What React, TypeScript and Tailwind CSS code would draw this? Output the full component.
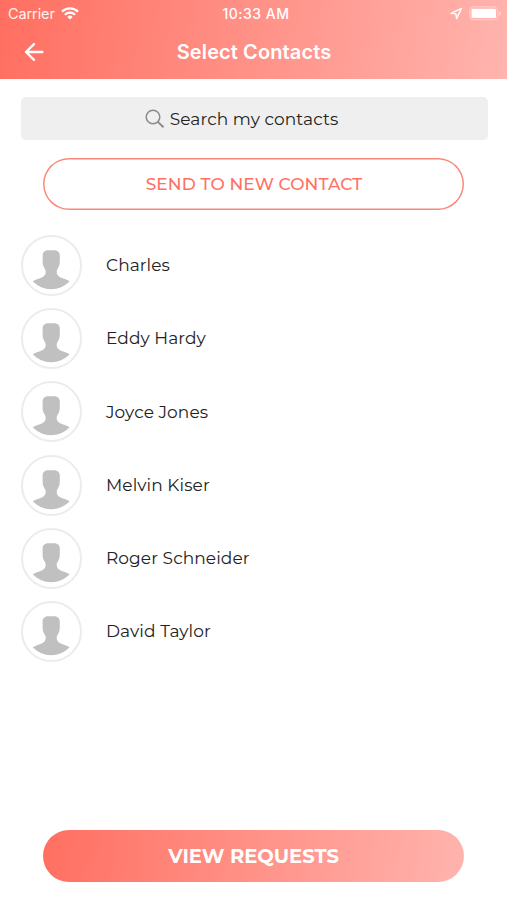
const contacts = ['Charles', 'Eddy Hardy', 'Joyce Jones', 'Melvin Kiser', 'Roger Schneider', 'David Taylor'];

const WifiIcon = () => (
  <svg width="18" height="13" viewBox="0 0 18 13" fill="none" stroke="#fff" strokeWidth="2.3">
    <path d="M1 4.6a11.4 11.4 0 0 1 16 0" />
    <path d="M3.9 7.7a7.2 7.2 0 0 1 10.2 0" />
    <path d="M9 12.6 6.3 9.9a3.8 3.8 0 0 1 5.4 0z" fill="#fff" stroke="none" />
  </svg>
);

const LocationIcon = () => (
  <svg width="13" height="13" viewBox="0 0 13 13" fill="none" stroke="#fff" strokeWidth="1.4" strokeLinejoin="round">
    <path d="M11.4 1.4 1 6.4 5.9 6.9 6.6 11.6z" />
  </svg>
);

const BatteryIcon = () => (
  <svg width="33" height="15" viewBox="0 0 33 15">
    <rect x="0.8" y="0.9" width="27.9" height="12.8" rx="4" fill="none" stroke="#fff" strokeWidth="1.3" strokeOpacity="0.35" />
    <rect x="2.5" y="2.8" width="24.5" height="9.2" rx="1.2" fill="#fff" />
    <path d="M30.3 5.2c2 .8 2 3.600 0 4.400z" fill="#fff" fillOpacity="0.5" />
  </svg>
);

const BackIcon = () => (
  <svg width="20" height="20" viewBox="0 0 20 20" fill="none" stroke="#fff" strokeWidth="2.4" strokeLinecap="round" strokeLinejoin="round">
    <path d="M18.3 10H2.600M10 2.200 2 10l8 7.800" />
  </svg>
);

const SearchIcon = () => (
  <svg width="20" height="20" viewBox="0 0 20 20" fill="none" stroke="#8a8a8a">
    <circle cx="8" cy="8" r="6.8" strokeWidth="1.5" />
    <path d="m12.9 12.9 5.6 5.4" strokeWidth="2" />
  </svg>
);

const Avatar = () => (
  <div className="size-[61px] shrink-0 rounded-full border-2 border-[#ececec] bg-white">
    <svg width="57" height="57" viewBox="0 0 57 57" fill="#c1c0c1">
      <path d="M25 13.300h6.400c3.400 0 5.400 2.300 5.400 5.500v5c0 3.200-.5 5.500-1.700 7.200-.8 1.200-1.400 2.200-1.400 4 0 2.600 1.400 4.300 4 5.500 3.300 1.500 6.500 2 9 3.800-5.300 5.300-11.500 8-18.500 8s-13.200-2.700-18.500-8c2.500-1.800 5.700-2.300 9-3.800 2.600-1.200 4-2.900 4-5.500 0-1.800-.6-2.800-1.400-4-1.200-1.700-1.700-4-1.700-7.200v-5c0-3.200 2-5.500 5.400-5.500z" />
    </svg>
  </div>
);

export default function App() {
  return (
    <div className="flex h-[900px] w-[507px] flex-col overflow-hidden bg-white font-['Montserrat','Inter',sans-serif] text-[#222]">
      <header className="h-[79px] shrink-0 bg-[linear-gradient(97deg,#ff6f61,#ffb4ae)] font-['Inter',sans-serif] text-white">
        <div className="grid h-[27px] grid-cols-3 items-center pr-[5px] pl-2">
          <div className="flex items-center gap-1.5">
            <span className="text-[14.5px] tracking-[-0.1px] opacity-90">Carrier</span>
            <WifiIcon />
          </div>
          <span className="pl-0.5 text-center text-[14px] font-medium tracking-[0.5px]">10:33 AM</span>
          <div className="flex items-center justify-end gap-[6px]">
            <LocationIcon />
            <BatteryIcon />
          </div>
        </div>
        <div className="grid h-[50px] grid-cols-[60px_1fr_60px] items-center">
          <button className="pl-6" aria-label="Back">
            <BackIcon />
          </button>
          <h1 className="pl-px text-center text-[20px] font-semibold tracking-[0.1px]">Select Contacts</h1>
        </div>
      </header>

      <main className="flex flex-1 flex-col">
        <div className="mr-[19px] ml-[21px] mt-[18px] flex h-[43px] items-center justify-center gap-[5px] rounded-[5px] bg-[#efefef] pt-px pr-[26px]">
          <SearchIcon />
          <span className="pt-0.5 text-[17px] tracking-[0.1px] whitespace-nowrap">Search my contacts</span>
        </div>

        <button className="mx-[43px] mt-[18px] h-[52px] rounded-full pt-px pl-px text-[17px] font-medium tracking-[0.1px] text-[#ff7163] shadow-[inset_0_0_0_1.5px_#f98a7d]">
          SEND TO NEW CONTACT
        </button>

        <ul className="mt-[25px] flex flex-col gap-[12.2px] pl-[20.5px]">
          {contacts.map((name) => (
            <li key={name} className="flex items-center gap-[24.5px]">
              <Avatar />
              <span className="pt-px text-[17px] tracking-[0.08px] whitespace-nowrap">{name}</span>
            </li>
          ))}
        </ul>

        <button className="mx-[43px] mt-auto mb-[18px] h-[52px] rounded-full bg-[linear-gradient(97deg,#ff6f61,#ffb4ae)] pt-0.5 text-[19.5px] font-bold text-white">
          VIEW REQUESTS
        </button>
      </main>
    </div>
  );
}
